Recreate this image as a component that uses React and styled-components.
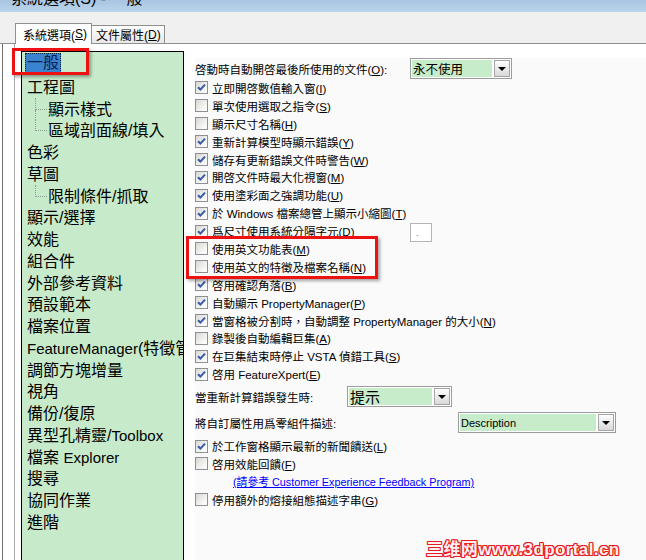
import React from "react";
import styled, { createGlobalStyle } from "styled-components";

const GlobalStyle = createGlobalStyle`
  body {
    margin: 0;
    background: #fff;
  }
`;

const UI = `"Liberation Sans", "Noto Sans CJK TC", sans-serif`;

// "&X" marks the mnemonic letter, drawn underlined
function mnemonic(text) {
  const i = text.indexOf("&");
  if (i < 0) return text;
  return (
    <>
      {text.slice(0, i)}
      <u>{text[i + 1]}</u>
      {text.slice(i + 2)}
    </>
  );
}

// latin words in the tree are drawn a bit smaller than the CJK glyphs
function treeText(text) {
  return text.split(/([A-Za-z]+)/).map((part, i) =>
    /[A-Za-z]/.test(part) ? <Lat key={i}>{part}</Lat> : part
  );
}

const tree = [
  { t: "一般", sel: true },
  { t: "工程圖" },
  { t: "顯示樣式", child: true },
  { t: "區域剖面線/填入", child: true, last: true },
  { t: "色彩" },
  { t: "草圖" },
  { t: "限制條件/抓取", child: true, last: true },
  { t: "顯示/選擇" },
  { t: "效能" },
  { t: "組合件" },
  { t: "外部參考資料" },
  { t: "預設範本" },
  { t: "檔案位置" },
  { t: "FeatureManager(特徵管理員)" },
  { t: "調節方塊增量" },
  { t: "視角" },
  { t: "備份/復原" },
  { t: "異型孔精靈/Toolbox" },
  { t: "檔案 Explorer" },
  { t: "搜尋" },
  { t: "協同作業" },
  { t: "進階" },
];

const options = [
  ["立即開啓數值輸入窗(&I)", true],
  ["單次使用選取之指令(&S)", false],
  ["顯示尺寸名稱(&H)", false],
  ["重新計算模型時顯示錯誤(&Y)", true],
  ["儲存有更新錯誤文件時警告(&W)", true],
  ["開啓文件時最大化視窗(&M)", true],
  ["使用塗彩面之強調功能(&U)", true],
  ["於 Windows 檔案總管上顯示小縮圖(&T)", true],
  ["爲尺寸使用系統分隔字元(&D)", true, true],
  ["使用英文功能表(&M)", false],
  ["使用英文的特徵及檔案名稱(&N)", false],
  ["啓用確認角落(&B)", true],
  ["自動顯示 PropertyManager(&P)", true],
  ["當窗格被分割時，自動調整 PropertyManager 的大小(&N)", true],
  ["錄製後自動編輯巨集(&A)", false],
  ["在巨集結束時停止 VSTA 偵錯工具(&S)", true],
  ["啓用 FeatureXpert(&E)", true],
];

function CheckBox({ checked }) {
  return (
    <Box>
      {checked && (
        <svg width="11" height="11" viewBox="0 0 11 11">
          <path
            d="M2 5.2 L4.4 7.6 L9 2.6"
            fill="none"
            stroke="#3b5ba8"
            strokeWidth="2.1"
          />
        </svg>
      )}
    </Box>
  );
}

function Option({ label, checked, width }) {
  return (
    <CheckRow>
      <CheckBox checked={checked} />
      <CheckText $w={width}>{mnemonic(label)}</CheckText>
    </CheckRow>
  );
}

function Select({ value, width, size }) {
  return (
    <SelectBox $w={width}>
      <SelectField $size={size}>{value}</SelectField>
      <SelectButton>
        <Triangle />
      </SelectButton>
    </SelectBox>
  );
}

function App() {
  return (
    <Window>
      <GlobalStyle />
      <TitleBar>
        <TitleText>系統選項(S) - 一般</TitleText>
      </TitleBar>

      <TabStrip>
        <Tab $active>{mnemonic("系統選項(&S)")}</Tab>
        <Tab>{mnemonic("文件屬性(&D)")}</Tab>
      </TabStrip>

      <Body>
        <LeftRail />
        <Tree>
          {tree.map((item, i) => (
            <TreeItem key={i} $first={item.sel} $child={item.child}>
              {item.child && (
                <Connector>
                  <ConnTop />
                  <ConnBottom $last={item.last} />
                </Connector>
              )}
              {item.sel ? (
                <Selected>{item.t}</Selected>
              ) : (
                <span>{treeText(item.t)}</span>
              )}
            </TreeItem>
          ))}
        </Tree>

        <Panel>
          <SelectRow>
            <RowLabel $w={215}>{mnemonic("啓動時自動開啓最後所使用的文件(&O):")}</RowLabel>
            <Select value="永不使用" width={102} size={12.5} />
          </SelectRow>

          {options.map(([label, checked, sep], i) =>
            sep ? (
              <CheckRow key={i}>
                <CheckBox checked={checked} />
                <CheckText $w={194}>{mnemonic(label)}</CheckText>
                <SmallInput>.</SmallInput>
              </CheckRow>
            ) : (
              <Option key={i} label={label} checked={checked} />
            )
          )}

          <SelectRow $top={3}>
            <RowLabel $w={152}>當重新計算錯誤發生時:</RowLabel>
            <Select value="提示" width={105} size={15} />
          </SelectRow>

          <SelectRow $top={5}>
            <RowLabel $w={263}>將自訂屬性用爲零組件描述:</RowLabel>
            <Select value="Description" width={158} size={11} />
          </SelectRow>

          <Spacer $h={4} />
          <Option label="於工作窗格顯示最新的新聞饋送(&L)" checked />
          <Option label="啓用效能回饋(&F)" checked={false} />
          <LinkRow>
            <FeedbackLink href="#">(請參考 Customer Experience Feedback Program)</FeedbackLink>
          </LinkRow>
          <Spacer $h={2} />
          <Option label="停用額外的熔接組態描述字串(&G)" checked={false} />
        </Panel>
      </Body>

      <Mark $x={12} $y={48} $w={77} $h={27} />
      <Mark $x={186} $y={236} $w={192} $h={43} />
      <Watermark>三维网www.3dportal.cn</Watermark>
    </Window>
  );
}

export default App;

const Window = styled.div`
  position: relative;
  width: 646px;
  height: 560px;
  overflow: hidden;
  background: #fff;
  font-family: ${UI};
  color: #000;
`;

const TitleBar = styled.div`
  height: 12px;
  overflow: hidden;
  background: linear-gradient(#a9c5e2, #bbd4ec);
`;

const TitleText = styled.div`
  margin: -9px 0 0 11px;
  font-size: 16px;
  line-height: 16px;
  white-space: nowrap;
`;

const TabStrip = styled.div`
  display: flex;
  align-items: flex-end;
  height: 31px;
  padding-left: 15px;
  background: #f0f0f0;
  border-bottom: 1px solid #8e8f8f;
`;

const Tab = styled.div`
  box-sizing: border-box;
  display: flex;
  align-items: center;
  white-space: nowrap;
  font-size: 12px;
  ${(p) =>
    p.$active
      ? `
    width: 77px;
    height: 21px;
    margin-bottom: -1px;
    padding-left: 7px;
    background: #fff;
    border: 1px solid #8e8f8f;
    border-bottom: none;
  `
      : `
    width: 73px;
    height: 18px;
    padding-left: 4px;
    background: linear-gradient(#fefefe, #e8e8e8);
    border-top: 1px solid #8e8f8f;
    border-right: 1px solid #8e8f8f;
  `}
`;

const Body = styled.div`
  display: flex;
  height: 516px;
`;

const LeftRail = styled.div`
  box-sizing: border-box;
  width: 13px;
  margin-left: 2px;
  border-left: 1px solid #6f7072;
  border-right: 1px solid #a9a9a9;
`;

const Tree = styled.div`
  box-sizing: border-box;
  flex: 0 0 163px;
  height: 530px;
  margin: 7px 0 0 6px;
  padding: 0 0 0 5px;
  border: 1px solid #000;
  background: #c7ebca;
  overflow: hidden;
  font-family: "Liberation Sans", "Noto Sans CJK TC", sans-serif;
  font-size: 16px;
`;

const TreeItem = styled.div`
  display: flex;
  align-items: center;
  height: ${(p) => (p.$first ? "21px" : "21.75px")};
  margin-bottom: ${(p) => (p.$first ? "3.6px" : "0")};
  padding-left: ${(p) => (p.$child ? "8px" : "0")};
  white-space: nowrap;
  line-height: 21px;
`;

const Lat = styled.span`
  font-size: 15px;
`;

const Selected = styled.span`
  height: 20px;
  line-height: 20px;
  margin-left: -2px;
  padding: 0 2px;
  background: #3a84cf;
  color: #0b1f4a;
  outline: 1px dotted #10203a;
  outline-offset: -1px;
`;

const Connector = styled.span`
  display: flex;
  flex-direction: column;
  align-self: stretch;
  width: 12px;
  margin-right: 1px;
`;

const ConnTop = styled.span`
  flex: 1;
  border-left: 1px dotted #8f9a90;
  border-bottom: 1px dotted #8f9a90;
`;

const ConnBottom = styled.span`
  flex: 1;
  border-left: ${(p) => (p.$last ? "none" : "1px dotted #8f9a90")};
`;

const Panel = styled.div`
  flex: 1;
  margin: 14px 0 0 11px;
  background: #fafafa;
  font-size: 11.5px;
`;

const SelectRow = styled.div`
  display: flex;
  align-items: center;
  height: 21px;
  margin-top: ${(p) => p.$top || 0}px;
`;

const RowLabel = styled.span`
  flex: 0 0 ${(p) => p.$w}px;
  white-space: nowrap;
`;

const SelectBox = styled.div`
  box-sizing: border-box;
  display: flex;
  gap: 2px;
  width: ${(p) => p.$w}px;
  height: 21px;
  padding: 1px;
  border: 1px solid #9c9c9c;
  background: #fff;
`;

const SelectField = styled.div`
  flex: 1;
  display: flex;
  align-items: center;
  padding-left: 1px;
  background: #c7ecca;
  font-size: ${(p) => p.$size}px;
  white-space: nowrap;
  overflow: hidden;
`;

const SelectButton = styled.div`
  box-sizing: border-box;
  display: flex;
  align-items: center;
  justify-content: center;
  width: 16px;
  border: 1px solid #a5a5a5;
  background: linear-gradient(#fdfdfd, #d9d9d9);
`;

const Triangle = styled.span`
  width: 0;
  height: 0;
  border-left: 4px solid transparent;
  border-right: 4px solid transparent;
  border-top: 4px solid #000;
`;

const CheckRow = styled.div`
  display: flex;
  align-items: center;
  gap: 4px;
  height: 17.9px;
  white-space: nowrap;
`;

const CheckText = styled.span`
  ${(p) => (p.$w ? `flex: 0 0 ${p.$w}px;` : "")}
`;

const Box = styled.span`
  box-sizing: border-box;
  display: flex;
  align-items: center;
  justify-content: center;
  width: 13px;
  height: 13px;
  border: 1px solid #8d8f93;
  background: linear-gradient(135deg, #d8d8d4, #f6f6f4 70%, #fff);
`;

const SmallInput = styled.span`
  box-sizing: border-box;
  display: flex;
  align-items: flex-end;
  width: 22px;
  height: 19px;
  margin-top: 3px;
  padding: 0 0 3px 5px;
  border: 1px solid #b5b5b5;
  background: #fff;
  color: #777;
  font-size: 9px;
  line-height: 9px;
`;

const Spacer = styled.div`
  height: ${(p) => p.$h}px;
`;

const LinkRow = styled.div`
  display: flex;
  align-items: center;
  height: 16px;
  padding-left: 38px;
`;

const FeedbackLink = styled.a`
  color: #0000ff;
  font-size: 10.8px;
  text-decoration: underline;
  white-space: nowrap;
`;

const Mark = styled.div`
  position: absolute;
  left: ${(p) => p.$x}px;
  top: ${(p) => p.$y}px;
  width: ${(p) => p.$w}px;
  height: ${(p) => p.$h}px;
  box-sizing: border-box;
  border: 3px solid #ee1111;
  box-shadow: 2px 2px 3px rgba(0, 0, 0, 0.35);
  pointer-events: none;
`;

const Watermark = styled.div`
  position: absolute;
  left: 426px;
  top: 535px;
  font-family: "Liberation Sans", "Noto Sans CJK SC", sans-serif;
  font-weight: bold;
  font-size: 17px;
  letter-spacing: 0.4px;
  color: #ffeef0;
  white-space: nowrap;
  text-shadow: 1px 0 #e51c23, -1px 0 #e51c23, 0 1px #e51c23, 0 -1px #e51c23,
    1px 1px #e51c23, -1px -1px #e51c23, 1px -1px #e51c23, -1px 1px #e51c23;
`;
